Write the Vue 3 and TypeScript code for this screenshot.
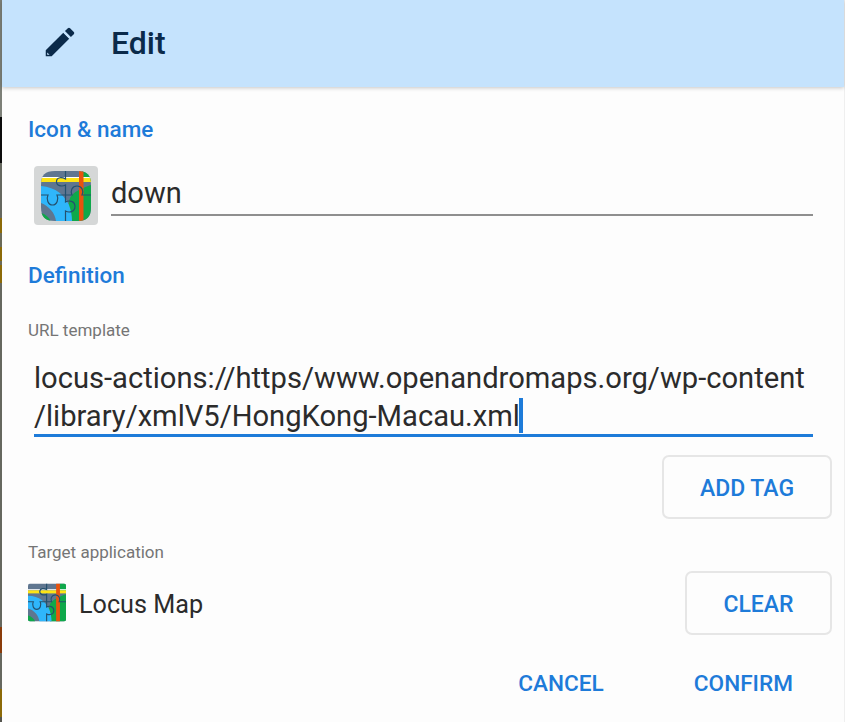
<script setup lang="ts">
const sections = { icon: 'Icon & name', def: 'Definition' }
const puzzle =
  'M49 0V16C42 12 32 12 31 20C30 30 42 32 49 28V62C56 58 68 60 68 71C68 82 56 84 49 80V100M0 48H14C10 56 14 68 23 68C32 68 36 56 32 48H62C58 40 62 30 72 30C82 30 86 40 82 48H100'
</script>

<template>
  <div class="screen">
    <div class="strip"></div>
    <div class="dialog">
      <header class="head">
        <svg class="pencil" viewBox="0 0 24 24" width="38" height="38">
          <path fill="#0b2a4a" d="M3 17.25V21h3.75L17.81 9.94l-3.75-3.75L3 17.25zM20.71 7.04a1 1 0 0 0 0-1.41l-2.34-2.34a1 1 0 0 0-1.41 0l-1.83 1.83 3.75 3.75 1.83-1.83z" />
          <path fill="#c5e3fd" d="M14.9 5.4l3.7 3.7-.7.7-3.7-3.7zM3.9 18.6l1.5 1.5H3.9z" />
        </svg>
        <span class="title">Edit</span>
      </header>
      <main class="body">
        <div class="section first">{{ sections.icon }}</div>
        <div class="name-row">
          <div class="icon-box">
            <svg class="map" viewBox="0 0 100 100" width="50" height="50">
              <defs><clipPath id="sq"><path d="M28 0H72C92 0 100 8 100 28V72C100 92 92 100 72 100H28C8 100 0 92 0 72V28C0 8 8 0 28 0Z" /></clipPath></defs>
              <g clip-path="url(#sq)">
                <rect width="100" height="100" fill="#5f7690" />
                <path fill="#0fa84a" d="M100 0V100H58C58 80 50 62 62 48C72 38 88 32 100 28V20H82V0Z" />
                <path fill="#2fb6fb" d="M0 30C30 32 48 50 56 68C60 78 62 90 62 100H30C28 84 16 70 0 64Z" />
                <path fill="#0fa84a" d="M0 84C8 86 16 92 19 100H0Z" />
                <rect y="12" width="100" height="2" fill="#fff" />
                <rect y="14" width="100" height="8" fill="#fde415" />
                <rect x="76" width="9" height="100" fill="#e8530e" />
                <path fill="none" stroke="#24506e" stroke-width="2.4" :d="puzzle" />
              </g>
            </svg>
          </div>
          <div class="name-field">down</div>
        </div>
        <div class="section second">{{ sections.def }}</div>
        <div class="caption url">URL template</div>
        <div class="url-field">locus-actions://https/www.openandromaps.org/wp-content<br />/library/xmlV5/HongKong-Macau.xml<span class="caret"></span></div>
        <div class="tag-row"><button class="outline tag">ADD TAG</button></div>
        <div class="caption target">Target application</div>
        <div class="app-row">
          <svg class="map small" viewBox="0 0 100 100" width="38" height="39">
            <defs><clipPath id="sq2"><rect width="100" height="100" rx="6" /></clipPath></defs>
            <g clip-path="url(#sq2)">
              <rect width="100" height="100" fill="#5f7690" />
              <path fill="#0fa84a" d="M100 0V100H58C58 80 50 62 62 48C72 38 88 32 100 28V20H84V0Z" />
              <path fill="#2fb6fb" d="M0 32C30 32 48 50 56 68C60 78 62 90 62 100H30C28 84 16 70 0 66Z" />
              <path fill="#0fa84a" d="M0 84C8 86 16 92 19 100H0Z" />
              <rect y="15" width="100" height="3" fill="#fff" />
              <rect y="18" width="100" height="8" fill="#fde415" />
              <rect x="74" width="10" height="100" fill="#e8530e" />
              <path fill="none" stroke="#24506e" stroke-width="3" :d="puzzle" />
            </g>
          </svg>
          <span class="app-name">Locus Map</span>
          <button class="outline clear">CLEAR</button>
        </div>
        <footer class="actions">
          <button class="flat">CANCEL</button>
          <button class="flat">CONFIRM</button>
        </footer>
      </main>
    </div>
  </div>
</template>

<style scoped>
.screen {
  display: flex;
  width: 845px;
  height: 722px;
  overflow: hidden;
  font-family: Roboto, "Liberation Sans", sans-serif;
  background: #fdfdfd;
}
.strip {
  flex: 0 0 2px;
  background: linear-gradient(
    to bottom,
    #7d8078 0 117px,
    #0c0c0c 117px 163px,
    #66685f 163px 218px,
    #8c6a08 218px 233px,
    #6a6a58 233px 247px,
    #8c6a08 247px 261px,
    #6a6a58 261px 265px,
    #8c6a08 265px 283px,
    #66685f 283px 627px,
    #8a3c0a 627px 653px,
    #66685f 653px 689px,
    #8c6a08 689px 717px,
    #55554f 717px
  );
}
.dialog {
  flex: 1;
  display: flex;
  flex-direction: column;
  border-right: 1px solid #efefef;
  min-width: 0;
}
.head {
  flex: 0 0 87px;
  display: flex;
  align-items: center;
  gap: 32px;
  padding-left: 39px;
  background: #c5e3fd;
  box-shadow: 0 1px 4px rgba(0, 0, 0, 0.22);
  position: relative;
}
.pencil { margin-top: -3px; }
.title {
  font-size: 32px;
  font-weight: 500;
  color: #0b2a4a;
  line-height: 44px;
  padding-bottom: 2px;
}
.body {
  flex: 1;
  display: flex;
  flex-direction: column;
  padding: 0 12px 0 26px;
}
.section {
  font-size: 22.5px;
  font-weight: 500;
  color: #1e7bd9;
  line-height: 28px;
}
.section.first { margin-top: 28px; }
.section.second { margin-top: 36px; }
.name-row {
  display: flex;
  align-items: flex-start;
  gap: 13px;
  margin-top: 23px;
  padding-left: 6px;
  padding-right: 19px;
}
.icon-box {
  width: 64px;
  height: 59px;
  flex: none;
  display: flex;
  align-items: center;
  justify-content: center;
  background: #d5d7d7;
  border-radius: 4px;
}
.map { display: block; flex: none; }
.map.small { margin-top: -2px; }
.name-field {
  flex: 1;
  height: 48px;
  line-height: 54px;
  font-size: 29px;
  color: #2b2b2b;
  border-bottom: 2px solid #8f8f8f;
  margin-bottom: 2px;
}
.caption {
  font-size: 17px;
  color: #757575;
  line-height: 22px;
}
.caption.url { margin-top: 30px; }
.caption.target { margin-top: 22px; }
.url-field {
  margin: 18px 19px 0 6px;
  font-size: 29.15px;
  line-height: 38px;
  color: #2b2b2b;
  white-space: nowrap;
  height: 75px;
  border-bottom: 3px solid #1e7bd9;
}
.caret {
  display: inline-block;
  width: 4px;
  height: 35px;
  margin-left: -1px;
  vertical-align: -7px;
  background: #1e7bd9;
}
.tag-row {
  display: flex;
  justify-content: flex-end;
  margin-top: 18px;
}
button {
  font-family: inherit;
  font-size: 23px;
  font-weight: 500;
  color: #1e7bd9;
  background: transparent;
  border: none;
  padding: 0;
}
.outline {
  height: 64px;
  padding-top: 2px;
  border: 2px solid #e6e6e6;
  border-radius: 7px;
}
.tag { width: 170px; }
.app-row {
  display: flex;
  align-items: center;
  margin-top: 8px;
}
.app-name {
  margin-left: 13px;
  padding-top: 2px;
  font-size: 25.2px;
  color: #2b2b2b;
}
.clear {
  width: 147px;
  margin-left: auto;
}
.actions {
  display: flex;
  justify-content: flex-end;
  gap: 90px;
  margin-top: 32px;
  padding-right: 39px;
}
.flat { font-size: 22.6px; line-height: 34px; }
</style>
